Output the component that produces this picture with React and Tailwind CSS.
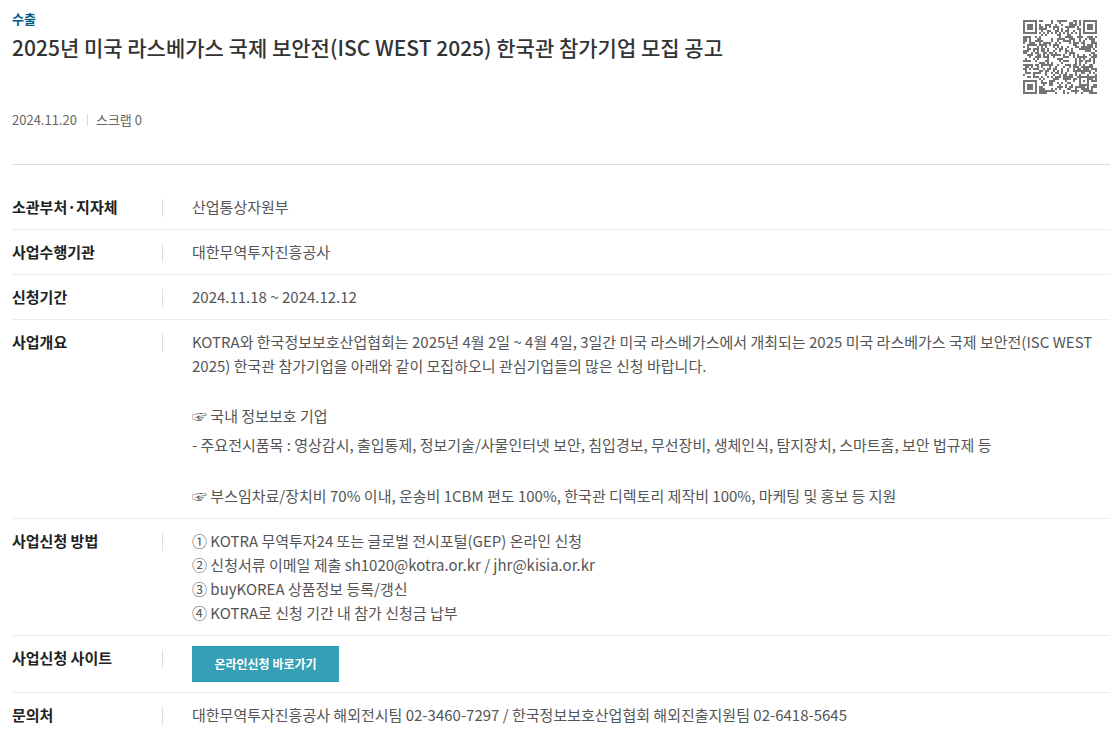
import { useMemo } from 'react'

const PAGE_URL =
  'https://www.bizinfo.go.kr/web/lay1/bbs/S1T122C128/AS/74/view.do?pblancId=PBLN_000000000102926'

// QR version 5, error correction level L, mask 3
const QR_SIZE = 37
const QR_DATA = 108
const QR_ECC = 26
const QR_MASK = 3

function gfMul(a, b) {
  let z = 0
  for (let i = 7; i >= 0; i--) {
    z = (z << 1) ^ ((z >>> 7) * 0x11d)
    z ^= ((b >>> i) & 1) * a
  }
  return z
}

function eccBytes(data) {
  const gen = new Array(QR_ECC).fill(0)
  gen[QR_ECC - 1] = 1
  let root = 1
  for (let i = 0; i < QR_ECC; i++) {
    for (let j = 0; j < QR_ECC; j++) {
      gen[j] = gfMul(gen[j], root)
      if (j + 1 < QR_ECC) gen[j] ^= gen[j + 1]
    }
    root = gfMul(root, 2)
  }
  const rem = new Array(QR_ECC).fill(0)
  data.forEach((b) => {
    const factor = b ^ rem.shift()
    rem.push(0)
    gen.forEach((g, i) => {
      rem[i] ^= gfMul(g, factor)
    })
  })
  return rem
}

function encode(text) {
  const bits = []
  const push = (value, len) => {
    for (let i = len - 1; i >= 0; i--) bits.push((value >>> i) & 1)
  }
  push(4, 4)
  push(text.length, 8)
  for (const c of text) push(c.charCodeAt(0), 8)
  push(0, 4)
  const bytes = []
  for (let i = 0; i < bits.length; i += 8) {
    bytes.push(parseInt(bits.slice(i, i + 8).join(''), 2))
  }
  for (let pad = 0xec; bytes.length < QR_DATA; pad ^= 0xec ^ 0x11) bytes.push(pad)
  const all = [...bytes, ...eccBytes(bytes)]

  const grid = Array.from({ length: QR_SIZE }, () => new Array(QR_SIZE).fill(null))
  const set = (x, y, dark) => {
    if (x >= 0 && y >= 0 && x < QR_SIZE && y < QR_SIZE) grid[y][x] = !!dark
  }

  for (let i = 0; i < QR_SIZE; i++) {
    set(6, i, i % 2 === 0)
    set(i, 6, i % 2 === 0)
  }
  const square = (cx, cy, r, lightRings) => {
    for (let dy = -r; dy <= r; dy++) {
      for (let dx = -r; dx <= r; dx++) {
        const d = Math.max(Math.abs(dx), Math.abs(dy))
        set(cx + dx, cy + dy, !lightRings.includes(d))
      }
    }
  }
  square(3, 3, 4, [2, 4])
  square(QR_SIZE - 4, 3, 4, [2, 4])
  square(3, QR_SIZE - 4, 4, [2, 4])
  square(30, 30, 2, [1])

  const format = 8 | QR_MASK
  let rem = format
  for (let i = 0; i < 10; i++) rem = (rem << 1) ^ ((rem >>> 9) * 0x537)
  const info = ((format << 10) | rem) ^ 0x5412
  const bit = (i) => (info >>> i) & 1
  for (let i = 0; i <= 5; i++) set(8, i, bit(i))
  set(8, 7, bit(6))
  set(8, 8, bit(7))
  set(7, 8, bit(8))
  for (let i = 9; i < 15; i++) set(14 - i, 8, bit(i))
  for (let i = 0; i < 8; i++) set(QR_SIZE - 1 - i, 8, bit(i))
  for (let i = 8; i < 15; i++) set(8, QR_SIZE - 15 + i, bit(i))
  set(8, QR_SIZE - 8, 1)

  // zigzag upwards and downwards in two-module columns, from the right
  let n = 0
  for (let right = QR_SIZE - 1; right >= 1; right -= 2) {
    if (right === 6) right = 5
    const upward = ((right + 1) & 2) === 0
    for (let v = 0; v < QR_SIZE; v++) {
      for (let j = 0; j < 2; j++) {
        const x = right - j
        const y = upward ? QR_SIZE - 1 - v : v
        if (grid[y][x] !== null) continue
        const dark = n < all.length * 8 && ((all[n >>> 3] >>> (7 - (n & 7))) & 1) === 1
        grid[y][x] = dark !== ((x + y) % 3 === 0)
        n++
      }
    }
  }
  return grid
}

function QrCode({ value, className }) {
  const path = useMemo(() => {
    let d = ''
    encode(value).forEach((row, y) =>
      row.forEach((dark, x) => {
        if (dark) d += `M${x} ${y}h1v1h-1z`
      }),
    )
    return d
  }, [value])

  return (
    <svg
      className={className}
      viewBox={`0 0 ${QR_SIZE} ${QR_SIZE}`}
      shapeRendering="crispEdges"
      role="img"
      aria-label="QR"
    >
      <path d={path} fill="#757575" />
    </svg>
  )
}

function Row({ label, children }) {
  return (
    <div className="flex items-start border-b border-[#ebebeb] py-[10px] last:border-b-0">
      <dt className="w-[150px] shrink-0 font-bold text-[#222]">{label}</dt>
      <dd className="flex min-w-0 flex-1">
        <span className="mt-1 mr-[29px] h-[18px] w-px shrink-0 bg-[#ddd]" />
        <div className="min-w-0 flex-1">{children}</div>
      </dd>
    </div>
  )
}

export default function App() {
  return (
    <main className="bg-white pt-[9px] pr-[5px] pl-3 font-['Noto_Sans_CJK_KR',sans-serif] text-[15px] leading-6 text-[#555] break-keep">
      <header className="flex items-start justify-between border-b border-[#ddd] pb-8">
        <div>
          <p className="text-[13px] leading-5 font-bold text-[#005b85]">수출</p>
          <h1 className="text-[21px] leading-9 font-medium text-[#333]">
            2025년 미국 라스베가스 국제 보안전(ISC WEST 2025) 한국관 참가기업 모집 공고
          </h1>
          <div className="mt-[43px] flex items-center text-[13px] leading-6 text-[#666]">
            <time dateTime="2024-11-20">2024.11.20</time>
            <span className="mr-2 ml-[10px] h-3 w-px bg-[#ddd]" />
            <span>스크랩 0</span>
          </div>
        </div>
        <QrCode value={PAGE_URL} className="mt-[11px] mr-[13px] h-[74px] w-[74px] shrink-0" />
      </header>

      <dl className="pt-5">
        <Row label="소관부처·지자체">산업통상자원부</Row>
        <Row label="사업수행기관">대한무역투자진흥공사</Row>
        <Row label="신청기간">2024.11.18 ~ 2024.12.12</Row>
        <Row label="사업개요">
          <p>
            KOTRA와 한국정보보호산업협회는 2025년 4월 2일 ~ 4월 4일, 3일간 미국 라스베가스에서
            개최되는 2025 미국 라스베가스 국제 보안전(ISC WEST 2025) 한국관 참가기업을 아래와 같이
            모집하오니 관심기업들의 많은 신청 바랍니다.
          </p>
          <p className="mt-[26px]">☞ 국내 정보보호 기업</p>
          <p className="mt-[5px]">
            - 주요전시품목 : 영상감시, 출입통제, 정보기술/사물인터넷 보안, 침입경보, 무선장비,
            생체인식, 탐지장치, 스마트홈, 보안 법규제 등
          </p>
          <p className="mt-[27px]">
            ☞ 부스임차료/장치비 70% 이내, 운송비 1CBM 편도 100%, 한국관 디렉토리 제작비 100%,
            마케팅 및 홍보 등 지원
          </p>
        </Row>
        <Row label="사업신청 방법">
          <ul>
            <li>① KOTRA 무역투자24 또는 글로벌 전시포털(GEP) 온라인 신청</li>
            <li>② 신청서류 이메일 제출 sh1020@kotra.or.kr / jhr@kisia.or.kr</li>
            <li>③ buyKOREA 상품정보 등록/갱신</li>
            <li>④ KOTRA로 신청 기간 내 참가 신청금 납부</li>
          </ul>
        </Row>
        <Row label="사업신청 사이트">
          <a
            href="#apply"
            className="flex h-9 w-[147px] items-center justify-center bg-[#35a0b5] text-[12px] font-bold text-white"
          >
            온라인신청 바로가기
          </a>
        </Row>
        <Row label="문의처">
          대한무역투자진흥공사 해외전시팀 02-3460-7297 / 한국정보보호산업협회 해외진출지원팀
          02-6418-5645
        </Row>
      </dl>
    </main>
  )
}
